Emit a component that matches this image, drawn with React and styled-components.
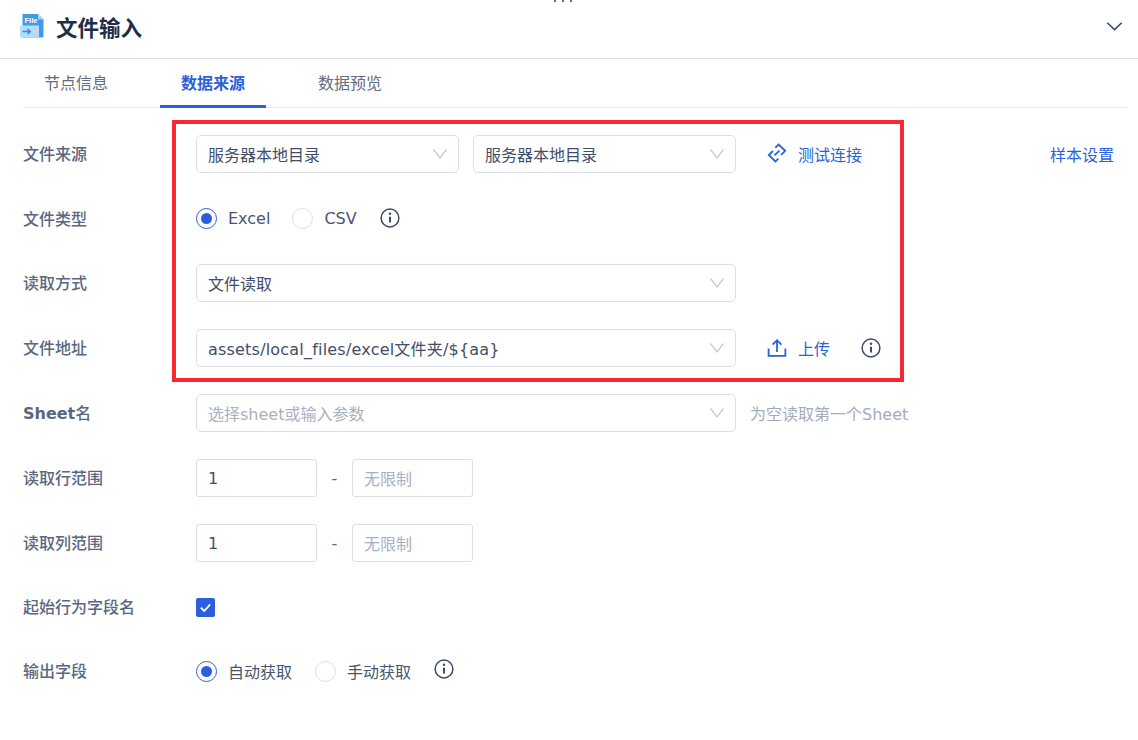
import React from 'react';
import styled, { createGlobalStyle } from 'styled-components';

const GlobalStyle = createGlobalStyle`
  html, body {
    margin: 0;
    padding: 0;
    background: #fff;
    overflow: hidden;
  }
  body {
    font-family: 'DejaVu Sans', 'Noto Sans CJK SC', sans-serif;
    color: #364259;
  }
`;

const Page = styled.div`
  position: relative;
  width: 1138px;
  height: 740px;
  overflow: hidden;
  background: #fff;
`;

const Dots = styled.div`
  position: absolute;
  top: 0;
  left: 554px;
  display: flex;
  gap: 6px;
  i {
    width: 2px;
    height: 2px;
    background: #5b6b8a;
  }
`;

const Header = styled.div`
  box-sizing: border-box;
  height: 59px;
  display: flex;
  align-items: center;
  justify-content: space-between;
  padding: 0 15px 6px 20px;
  border-bottom: 1px solid #dfe1ea;
`;

const Title = styled.div`
  display: flex;
  align-items: center;
  gap: 12px;
  font-size: 21.5px;
  font-weight: 700;
  color: #1f2d4a;
`;

const Tabs = styled.div`
  height: 48px;
  margin: 0 11px 0 23px;
  display: flex;
  gap: 31px;
  border-bottom: 1px solid #e6e8ef;
`;

const Tab = styled.div`
  box-sizing: border-box;
  height: 49px;
  width: 106px;
  display: flex;
  align-items: center;
  justify-content: center;
  font-size: 16px;
  font-weight: ${p => (p.$active ? 700 : 400)};
  color: ${p => (p.$active ? '#2b5fdc' : '#5f6c82')};
  border-bottom: 3px solid ${p => (p.$active ? '#2b5fdc' : 'transparent')};
`;

const Form = styled.div`
  padding: 27px 24px 0 23px;
  display: flex;
  flex-direction: column;
  gap: 27px;
`;

const Row = styled.div`
  height: ${p => p.$height || 38}px;
  display: flex;
  align-items: center;
`;

const Label = styled.div`
  width: 173px;
  flex: none;
  padding-bottom: 2px;
  font-size: 16px;
  font-weight: 500;
  color: #5a6780;
  b {
    font-weight: 700;
  }
`;

const Select = styled.div`
  box-sizing: border-box;
  width: ${p => p.$width}px;
  height: 38px;
  flex: none;
  margin-right: ${p => p.$gap || 0}px;
  padding: 0 10px 0 11px;
  display: flex;
  align-items: center;
  justify-content: space-between;
  border: 1px solid #dcdfea;
  border-radius: 5px;
  font-size: 16px;
  letter-spacing: ${p => (p.$spaced ? 0.2 : 0)}px;
  color: ${p => (p.$placeholder ? '#a9b0bf' : '#414e69')};
  svg {
    color: #c6cad4;
    flex: none;
  }
`;

const Input = styled.div`
  box-sizing: border-box;
  width: 121px;
  height: 38px;
  padding: 0 11px;
  display: flex;
  align-items: center;
  border: 1px solid #dcdfea;
  border-radius: 3px;
  font-size: 16px;
  color: ${p => (p.$placeholder ? '#a9b0bf' : '#414e69')};
`;

const Dash = styled.span`
  width: 35px;
  text-align: center;
  font-size: 16px;
  color: #5a6780;
`;

const Link = styled.div`
  display: flex;
  align-items: center;
  gap: 11px;
  margin-left: ${p => p.$left || 0}px;
  font-size: 16px;
  color: #2b5fdc;
`;

const LinkGlyph = styled.span`
  display: flex;
  margin-top: -3px;
`;

const Spacer = styled.div`
  flex: 1;
`;

const Hint = styled.div`
  margin-left: 14px;
  font-size: 16px;
  color: #a4abba;
`;

const RadioItem = styled.label`
  display: flex;
  align-items: center;
  gap: 11px;
  margin-right: ${p => p.$right}px;
  font-size: 16px;
  color: #4a5670;
`;

const RadioCircle = styled.span`
  box-sizing: border-box;
  width: 21px;
  height: 21px;
  border-radius: 50%;
  display: flex;
  align-items: center;
  justify-content: center;
  border: 1px solid ${p => (p.$on ? '#2b5fdc' : '#dcdfea')};
  &::after {
    content: '';
    width: 11px;
    height: 11px;
    border-radius: 50%;
    background: ${p => (p.$on ? '#2b5fdc' : 'transparent')};
  }
`;

const Checkbox = styled.span`
  width: 19px;
  height: 19px;
  border-radius: 2px;
  background: #2b5fdc;
  display: flex;
  align-items: center;
  justify-content: center;
`;

const InfoWrap = styled.span`
  display: flex;
  margin-left: ${p => p.$left || 0}px;
  margin-top: ${p => (p.$up ? -p.$up : 0)}px;
  color: #3e4b66;
`;

// 红色标注框
const Annotation = styled.div`
  position: absolute;
  left: 172px;
  top: 120px;
  width: 732px;
  height: 262px;
  box-sizing: border-box;
  border: 4px solid #fb2730;
  pointer-events: none;
`;

const Chevron = ({ size = 16 }) => (
  <svg width={size} height={size} viewBox="0 0 16 16" fill="none" stroke="currentColor" strokeWidth="1.3">
    <path d="M1.5 3.5 8 12l6.5-8.5" />
  </svg>
);

const HeaderChevron = () => (
  <svg width="17" height="17" viewBox="0 0 16 16" fill="none" stroke="#3e4b66" strokeWidth="1.5">
    <path d="M1.2 4.5 8 11l6.8-6.5" />
  </svg>
);

const Info = () => (
  <svg width="20" height="20" viewBox="0 0 20 20" fill="none" stroke="currentColor" strokeWidth="1.5">
    <circle cx="10" cy="10" r="8.9" />
    <path d="M10 8.8v5.8" strokeWidth="2" />
    <circle cx="10" cy="5.8" r="1.2" fill="currentColor" stroke="none" />
  </svg>
);

const Radio = ({ on, children, right = 22 }) => (
  <RadioItem $right={right}>
    <RadioCircle $on={on} />
    {children}
  </RadioItem>
);

const FileIcon = () => (
  <svg width="24" height="24" viewBox="0 0 24 24">
    <path d="M2.5 0h15.5l5.5 5.5V22a1.5 1.5 0 0 1-1.5 1.5H2.5z" fill="#3f9be8" />
    <path d="M18 0l5.5 5.5H18z" fill="#a9d6fa" />
    <path d="M1.5 11.5h17.5V23.5H1.5A1.5 1.5 0 0 1 0 22V13a1.5 1.5 0 0 1 1.5-1.5z" fill="#b5dcfb" />
    <path d="M2.5 17.5h7.5M7.5 15l2.7 2.5L7.5 20" fill="none" stroke="#2f8de4" strokeWidth="1.6" />
    <text x="4.5" y="8.5" fontSize="7.5" fontWeight="700" fill="#fff" fontFamily="Liberation Sans, sans-serif">File</text>
  </svg>
);

const LinkIcon = () => (
  <svg width="20" height="20" viewBox="0 0 20 20" fill="none" stroke="#2b5fdc" strokeWidth="1.8">
    <path d="M8.3 4.6 11.6 1.6l6.6 6.2-4.2 4" />
    <path d="M11.4 15.6 8.4 18.4 1.8 12l4.2-4" />
    <path d="M7.4 12.4 12.4 7.6" />
  </svg>
);

const UploadIcon = () => (
  <svg width="20" height="20" viewBox="0 0 20 20" fill="none" stroke="#2b5fdc" strokeWidth="1.8">
    <path d="M1.6 10.5v7.4h16.8v-7.4" />
    <path d="M10 14V2.5M5.6 6.6 10 2.2l4.4 4.4" />
  </svg>
);

const App = () => {
  return (
    <Page>
      <GlobalStyle />
      <Dots><i /><i /><i /></Dots>
      <Header>
        <Title>
          <FileIcon />
          文件输入
        </Title>
        <HeaderChevron />
      </Header>
      <Tabs>
        <Tab>节点信息</Tab>
        <Tab $active>数据来源</Tab>
        <Tab>数据预览</Tab>
      </Tabs>
      <Form>
        <Row>
          <Label>文件来源</Label>
          <Select $width={263} $gap={14}>服务器本地目录<Chevron /></Select>
          <Select $width={263}>服务器本地目录<Chevron /></Select>
          <Link $left={31}><LinkGlyph><LinkIcon /></LinkGlyph>测试连接</Link>
          <Spacer />
          <Link>样本设置</Link>
        </Row>
        <Row $height={37}>
          <Label>文件类型</Label>
          <Radio on>Excel</Radio>
          <Radio right={23}>CSV</Radio>
          <InfoWrap $up={2}><Info /></InfoWrap>
        </Row>
        <Row>
          <Label>读取方式</Label>
          <Select $width={540}>文件读取<Chevron /></Select>
        </Row>
        <Row>
          <Label>文件地址</Label>
          <Select $width={540} $spaced>{'assets/local_files/excel文件夹/${aa}'}<Chevron /></Select>
          <Link $left={31}><UploadIcon />上传</Link>
          <InfoWrap $left={31}><Info /></InfoWrap>
        </Row>
        <Row>
          <Label><b>Sheet</b>名</Label>
          <Select $width={540} $placeholder>选择sheet或输入参数<Chevron /></Select>
          <Hint>为空读取第一个Sheet</Hint>
        </Row>
        <Row>
          <Label>读取行范围</Label>
          <Input>1</Input>
          <Dash>-</Dash>
          <Input $placeholder>无限制</Input>
        </Row>
        <Row>
          <Label>读取列范围</Label>
          <Input>1</Input>
          <Dash>-</Dash>
          <Input $placeholder>无限制</Input>
        </Row>
        <Row $height={36}>
          <Label>起始行为字段名</Label>
          <Checkbox>
            <svg width="13" height="13" viewBox="0 0 13 13" fill="none" stroke="#fff" strokeWidth="1.8">
              <path d="M1.8 6.6 5.2 10l6-6.6" />
            </svg>
          </Checkbox>
        </Row>
        <Row>
          <Label>输出字段</Label>
          <Radio on right={23}>自动获取</Radio>
          <Radio right={23}>手动获取</Radio>
          <InfoWrap $up={4}><Info /></InfoWrap>
        </Row>
      </Form>
      <Annotation />
    </Page>
  );
};

export default App;
